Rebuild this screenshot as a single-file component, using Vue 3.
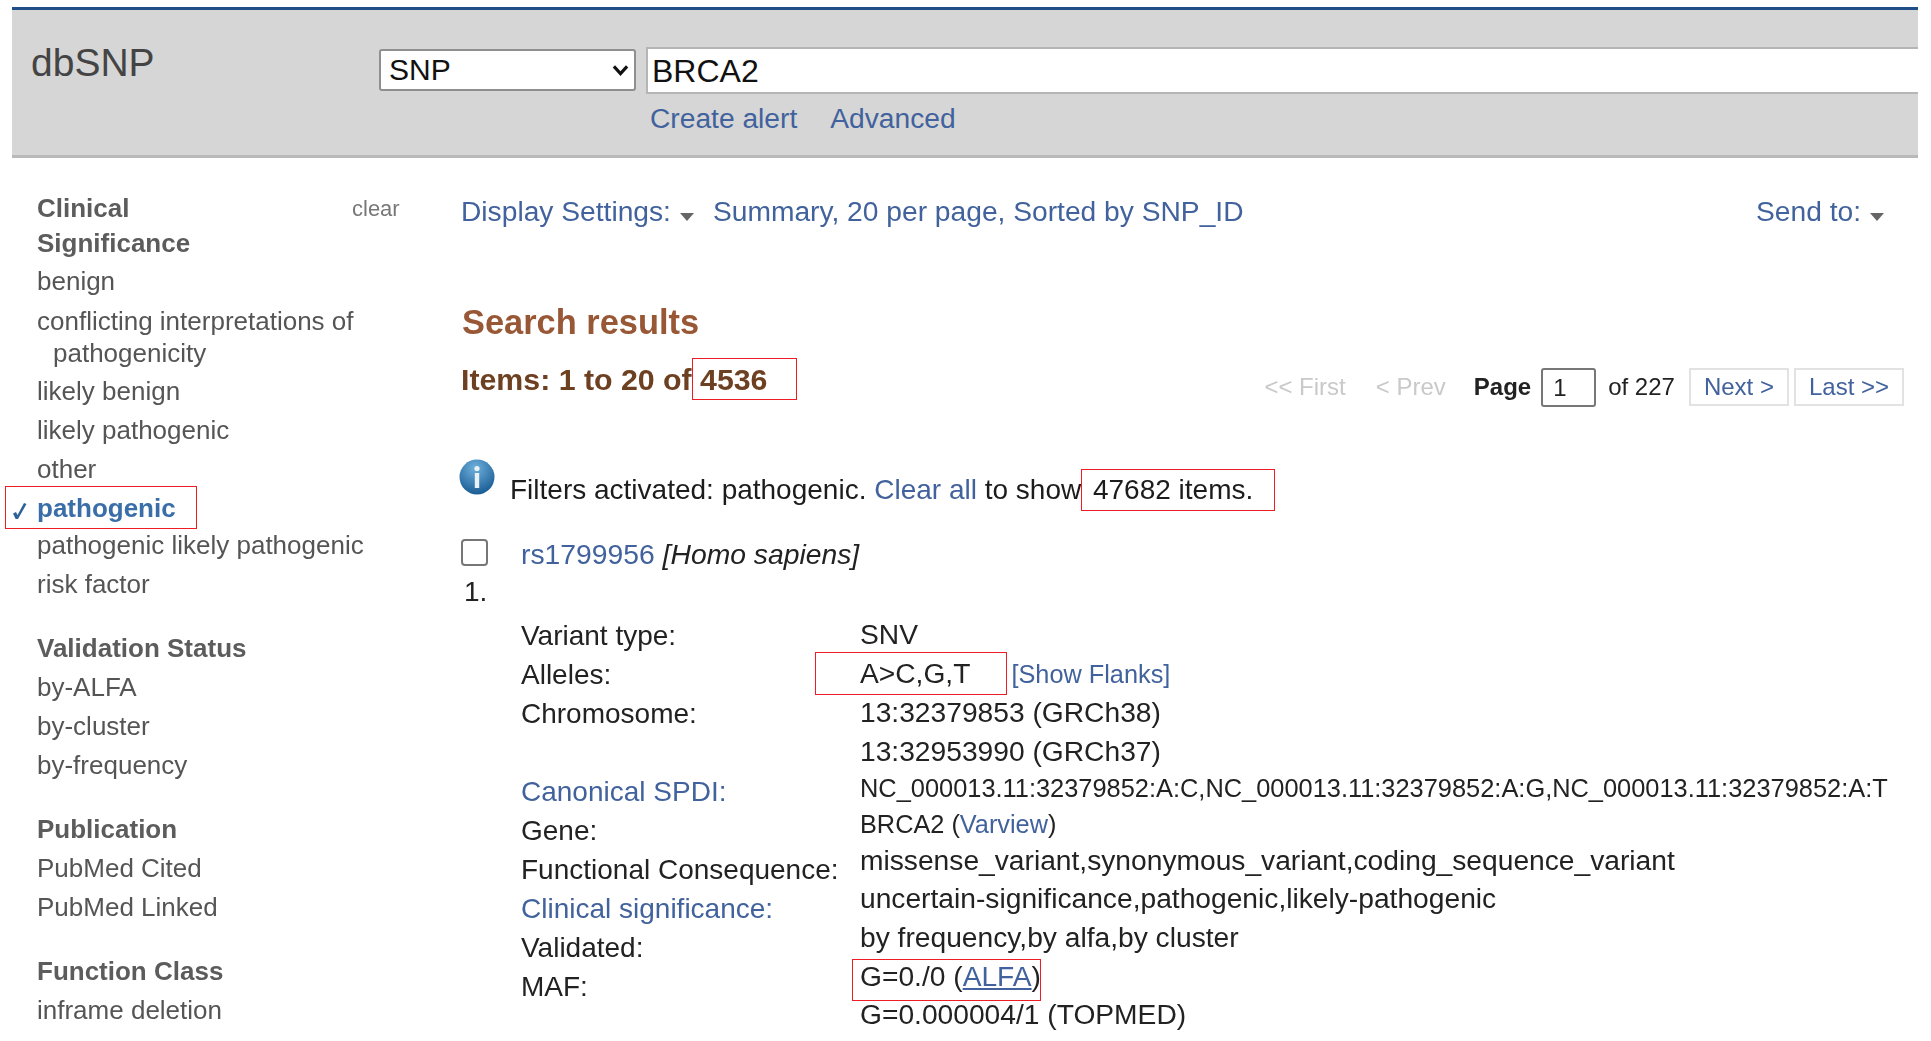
<script setup>
const clinical = ['benign', 'conflicting interpretations of', 'likely benign', 'likely pathogenic', 'other']
const validation = ['by-ALFA', 'by-cluster', 'by-frequency']
const labels = [
  { t: 'Variant type:' }, { t: 'Alleles:' }, { t: 'Chromosome:' }, { t: '\u00a0' },
  { t: 'Canonical SPDI:', link: true }, { t: 'Gene:' }, { t: 'Functional Consequence:' },
  { t: 'Clinical significance:', link: true }, { t: 'Validated:' }, { t: 'MAF:' }
]
</script>

<template>
  <div class="page">
    <header class="head">
      <div class="logo">dbSNP</div>
      <div class="search">
        <div class="search-row">
          <div class="select">SNP
            <svg class="chev" viewBox="0 0 14 10" width="17" height="12"><path d="M1.5 2 7 8l5.5-6" fill="none" stroke="#111" stroke-width="2.6"/></svg>
          </div>
          <div class="input">BRCA2</div>
        </div>
        <div class="search-links"><a>Create alert</a><a>Advanced</a></div>
      </div>
    </header>

    <div class="body">
      <aside class="side">
        <div class="side-title first"><b>Clinical<br>Significance</b><span class="clear">clear</span></div>
        <template v-for="c in clinical" :key="c">
          <div class="item" :class="{ wrap: c.startsWith('conflicting') }">{{ c }}<span v-if="c.startsWith('conflicting')" class="indent">pathogenicity</span></div>
        </template>
        <div class="item active mark">
          <svg class="check" viewBox="0 0 15 18" width="15" height="18"><path d="M1 11.5 4 10l1.5 3L12 1l2.5 1L6 17H3.6z" fill="#2e6399"/></svg>pathogenic
        </div>
        <div class="item tight">pathogenic likely pathogenic</div>
        <div class="item">risk factor</div>
        <div class="side-title">Validation Status</div>
        <div v-for="v in validation" :key="v" class="item">{{ v }}</div>
        <div class="side-title">Publication</div>
        <div class="item">PubMed Cited</div>
        <div class="item">PubMed Linked</div>
        <div class="side-title">Function Class</div>
        <div class="item">inframe deletion</div>
      </aside>

      <main class="main">
        <div class="toolbar">
          <a>Display Settings:<i class="tri"></i></a>
          <a class="sum">Summary, 20 per page, Sorted by SNP_ID</a>
          <a class="send">Send to:<i class="tri"></i></a>
        </div>
        <h1 class="title">Search results</h1>
        <div class="items-row">
          <div class="items">Items: 1 to 20 of<span class="box box-items"> 4536</span></div>
          <div class="pager">
            <span class="off">&lt;&lt; First</span>
            <span class="off">&lt; Prev</span>
            <b>Page</b>
            <span class="pageno">1</span>
            <span class="of">of 227</span>
            <a class="btn">Next &gt;</a>
            <a class="btn">Last &gt;&gt;</a>
          </div>
        </div>
        <div class="filters">
          <svg class="info" viewBox="0 0 36 36" width="36" height="36">
            <defs><radialGradient id="ig" cx="45%" cy="25%" r="80%"><stop offset="0" stop-color="#6fb0dc"/><stop offset="1" stop-color="#14578f"/></radialGradient></defs>
            <circle cx="18" cy="18" r="17.5" fill="url(#ig)"/>
            <circle cx="18" cy="9.5" r="2.6" fill="#e9f2f8"/>
            <rect x="15.8" y="14" width="4.4" height="15" fill="#e9f2f8"/>
          </svg>
          <span>Filters activated: pathogenic. <a>Clear all</a> to show<span class="box box-total"> 47682 items.</span></span>
        </div>
        <div class="result-head">
          <span class="cbx"></span>
          <span><a>rs1799956</a> <i>[Homo sapiens]</i></span>
        </div>
        <div class="num">1.</div>
        <div class="details">
          <div class="col-l">
            <div v-for="l in labels" :key="l.t" class="lab" :class="{ link: l.link }">{{ l.t }}</div>
          </div>
          <div class="col-r">
            <div class="val">SNV</div>
            <div class="val"><span class="box box-allele">A&gt;C,G,T</span><a class="flanks">[Show Flanks]</a></div>
            <div class="val">13:32379853 (GRCh38)</div>
            <div class="val">13:32953990 (GRCh37)</div>
            <div class="val spdi">NC_000013.11:32379852:A:C,NC_000013.11:32379852:A:G,NC_000013.11:32379852:A:T</div>
            <div class="val gene">BRCA2 (<a>Varview</a>)</div>
            <div class="val">missense_variant,synonymous_variant,coding_sequence_variant</div>
            <div class="val">uncertain-significance,pathogenic,likely-pathogenic</div>
            <div class="val">by frequency,by alfa,by cluster</div>
            <div class="val"><span class="box box-maf">G=0./0 (<a class="ul">ALFA</a>)</span></div>
            <div class="val">G=0.000004/1 (TOPMED)</div>
          </div>
        </div>
      </main>
    </div>
  </div>
</template>

<style>
html, body { margin: 0; background: #fff; overflow: hidden; }
</style>

<style scoped>
.page { height: 1041px; overflow: hidden; box-sizing: border-box; padding: 7px 13px 0 12px; font-family: "Liberation Sans", Arial, sans-serif; color: #222; filter: blur(0.6px); }
a { color: #41629c; }
.head { display: flex; height: 151px; box-sizing: border-box; background: #d6d6d6; border-top: 3px solid #1f4f86; border-bottom: 3px solid #b9b9b9; overflow: hidden; }
.logo { width: 367px; padding: 28px 0 0 19px; box-sizing: border-box; font-size: 39px; line-height: 50px; color: #444; }
.search { flex: 1; padding-top: 37px; margin-right: -60px; }
.search-row { display: flex; gap: 10px; }
.select { position: relative; width: 257px; height: 42px; margin-top: 2px; box-sizing: border-box; padding-left: 8px; background: #fff; border: 2px solid #8f8f8f; border-radius: 3px; font-size: 30px; line-height: 38px; color: #111; }
.chev { position: absolute; right: 5px; top: 13px; }
.input { flex: 1; height: 47px; box-sizing: border-box; padding-left: 4px; background: #fff; border: 2px solid #b5b5b5; font-size: 32px; line-height: 44px; color: #111; }
.search-links { display: flex; gap: 33px; padding: 6px 0 0 271px; font-size: 28.2px; line-height: 36px; }

.body { display: flex; }
.side { width: 449px; flex: none; padding: 33px 0 0 25px; box-sizing: border-box; font-size: 26px; line-height: 39px; color: #555; }
.side-title { position: relative; margin-top: 25px; font-weight: bold; color: #5c5c5c; }
.side-title.first { margin-top: 0; line-height: 35px; padding-bottom: 1px; }
.clear { position: absolute; left: 315px; top: 0; font-size: 22px; font-weight: normal; color: #777; }
.item.wrap { line-height: 32px; padding: 4px 0 3px; }
.indent { display: block; padding-left: 16px; }
.active { color: #3a6ea8; font-weight: bold; }
.mark { position: relative; }
.mark::after { content: ""; position: absolute; left: -32px; top: -3px; width: 190px; height: 41px; border: 1.5px solid #ee1c25; }
.tight { margin-top: -2px; }
.check { position: absolute; left: -25px; top: 13px; }

.main { flex: 1; min-width: 0; padding-top: 33px; }
.toolbar { display: flex; font-size: 28.2px; line-height: 40px; }
.tri { display: inline-block; margin-left: 9px; vertical-align: 0; border: 7px solid transparent; border-top: 8px solid #666; border-bottom: 0; }
.sum { margin-left: 19px; }
.send { margin-left: auto; margin-right: 34px; }
.title { margin: 70px 0 0 1px; font-size: 34.4px; line-height: 42px; font-weight: bold; color: #985735; }
.items-row { display: flex; justify-content: space-between; margin-top: 17px; }
.items { font-size: 30.3px; line-height: 40px; font-weight: bold; color: #6e4022; }
.box { position: relative; }
.box::after { content: ""; position: absolute; border: 1.5px solid #ee1c25; }
.box-items::after { left: 0; top: -5px; width: 103px; height: 40px; }
.pager { display: flex; align-items: center; font-size: 24px; margin-right: 14px; height: 44px; margin-top: 5px; }
.off { color: #c9c9c9; margin-right: 30px; }
.off + b { margin-left: -2px; color: #222; }
.pageno { width: 55px; height: 39px; box-sizing: border-box; margin-left: 10px; padding-left: 10px; border: 2px solid #777; border-radius: 3px; line-height: 35px; }
.of { margin: 0 14px 0 12px; font-weight: normal; }
.btn { height: 38px; box-sizing: border-box; padding: 0 13px; margin-left: 5px; line-height: 34px; border: 2px solid #e2e2e2; }
.of + .btn { margin-left: 0; }
.filters { display: flex; align-items: flex-start; gap: 15px; margin-top: 50px; font-size: 28px; line-height: 40px; color: #1c1c1c; }
.filters > span { margin-top: 11px; }
.info { flex: none; margin-left: -2px; }
.box-total { padding-left: 4px; }
.box-total::after { left: 0; top: -5px; width: 192px; height: 40px; }
.result-head { display: flex; align-items: center; margin-top: 24px; font-size: 28.3px; line-height: 40px; }
.cbx { width: 27px; height: 27px; box-sizing: border-box; margin: -4px 33px 0 0; background: #fff; border: 2px solid #777; border-radius: 4px; }
.num { margin: 0 0 0 3px; font-size: 28px; line-height: 36px; }
.details { display: flex; margin: 5px 0 0 60px; font-size: 28px; }
.col-l { width: 339px; flex: none; padding-top: 1px; }
.lab { line-height: 39px; white-space: nowrap; }
.link { color: #41629c; }
.val { line-height: 38.6px; white-space: nowrap; font-size: 28.2px; }
.spdi { font-size: 25.4px; line-height: 37.5px; }
.gene { line-height: 33px; font-size: 25.3px; }
.box-allele::after { left: -45px; top: -5px; width: 190px; height: 41px; }
.box-allele { margin-right: 41px; }
.flanks { font-size: 25.3px; }
.box-maf::after { left: -8px; top: -1px; width: 187px; height: 40px; }
.ul { text-decoration: underline; }
</style>
